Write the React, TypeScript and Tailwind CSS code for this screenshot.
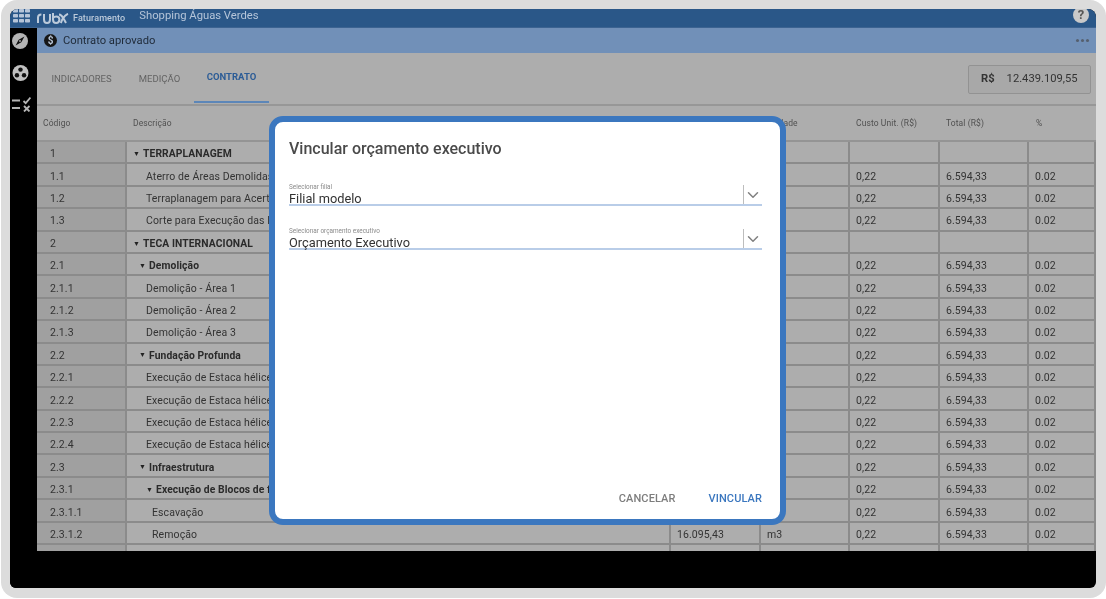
import { ChevronDown } from 'lucide-react';

type Row = {
  code: string;
  name: string;
  indent: string;
  group?: boolean;
  blank?: boolean;
};

const rows: Row[] = [
  { code: '1', name: 'TERRAPLANAGEM', indent: 'pl-[6px]', group: true, blank: true },
  { code: '1.1', name: 'Aterro de Áreas Demolidas', indent: 'pl-[19px]' },
  { code: '1.2', name: 'Terraplanagem para Acerto', indent: 'pl-[19px]' },
  { code: '1.3', name: 'Corte para Execução das D', indent: 'pl-[19px]' },
  { code: '2', name: 'TECA INTERNACIONAL', indent: 'pl-[6px]', group: true, blank: true },
  { code: '2.1', name: 'Demolição', indent: 'pl-[12px]', group: true },
  { code: '2.1.1', name: 'Demolição - Área 1', indent: 'pl-[19px]' },
  { code: '2.1.2', name: 'Demolição - Área 2', indent: 'pl-[19px]' },
  { code: '2.1.3', name: 'Demolição - Área 3', indent: 'pl-[19px]' },
  { code: '2.2', name: 'Fundação Profunda', indent: 'pl-[12px]', group: true },
  { code: '2.2.1', name: 'Execução de Estaca hélice', indent: 'pl-[19px]' },
  { code: '2.2.2', name: 'Execução de Estaca hélice', indent: 'pl-[19px]' },
  { code: '2.2.3', name: 'Execução de Estaca hélice', indent: 'pl-[19px]' },
  { code: '2.2.4', name: 'Execução de Estaca hélice', indent: 'pl-[19px]' },
  { code: '2.3', name: 'Infraestrutura', indent: 'pl-[12px]', group: true },
  { code: '2.3.1', name: 'Execução de Blocos de f', indent: 'pl-[19px]', group: true },
  { code: '2.3.1.1', name: 'Escavação', indent: 'pl-[25px]' },
  { code: '2.3.1.2', name: 'Remoção', indent: 'pl-[25px]' },
  { code: '', name: '', indent: '', blank: true },
];

const cols = 'grid grid-cols-[90px_544px_90px_89px_90px_89px_1fr]';
const cell = 'h-[22.4px] border-r-2 border-b-2 border-[#8b8b8b] pl-[6px] pt-[4px] flex items-center overflow-hidden whitespace-nowrap';

function GridIcon() {
  return (
    <svg width="17" height="14" viewBox="0 0 17 14" fill="#b5c4d8">
      {[0, 5, 10].map((y) =>
        [0, 6, 12].map((x) => <rect key={`${x}-${y}`} x={x} y={y} width="5" height="3.6" rx="0.8" />)
      )}
    </svg>
  );
}

function RubxLogo() {
  return (
    <svg width="32" height="11" viewBox="0 0 32 11" fill="none" stroke="#bccada" strokeWidth="2">
      <path d="M1 10V4.500C1 2.600 2.200 1.600 4.400 1.600" />
      <path d="M7 1v5.500C7 8.800 8.400 10 10 10s3-1.200 3-3.500V1" />
      <path d="M16 0v6.500c0 2 1.400 3.500 3.200 3.500 1.900 0 3.200-1.500 3.200-3.400 0-1.800-1.300-3.200-3.200-3.200-1.300 0-2.400.6-3.200 1.600" />
      <path d="M22 1.600c2 .1 3.200 1.500 4.500 3.900L29 10M31 .8c-2.600 1-4.400 3.400-5.600 5.400L23.800 10" />
    </svg>
  );
}

function Compass() {
  return (
    <svg width="16" height="16" viewBox="0 0 18 18">
      <circle cx="9" cy="9" r="9" fill="#b4b4b4" />
      <path d="M14 4 10.500 10.500 4 14 7.500 7.500Z" fill="#111" />
      <circle cx="9" cy="9" r="1" fill="#b4b4b4" />
    </svg>
  );
}

function Reel() {
  return (
    <svg width="17" height="16" viewBox="0 0 18 18">
      <circle cx="9" cy="9" r="9" fill="#c0c0c0" />
      <circle cx="9" cy="5.200" r="2.500" fill="#111" />
      <circle cx="5" cy="11.500" r="2.500" fill="#111" />
      <circle cx="13" cy="11.500" r="2.500" fill="#111" />
    </svg>
  );
}

function CheckList() {
  return (
    <svg width="20" height="16" viewBox="0 0 20 16" fill="none" stroke="#b4b4b4" strokeWidth="1.800">
      <path d="M1 4.500h8M1 12h8" />
      <path d="M12.500 5l2.200 2.200L19.500 1.500" />
      <path d="M13 10l5.500 5.500M18.500 10L13 15.500" />
    </svg>
  );
}

function Field({ label, value }: { label: string; value: string }) {
  return (
    <div className="relative h-[28px] border-b-2 border-[#b9cde8]">
      <div className="text-[6.4px] leading-[7px] text-[#8a8a8a] pt-[6px]">{label}</div>
      <div className="text-[12.8px] leading-[15px] text-[#333]">{value}</div>
      <div className="absolute right-0 top-[7px] flex items-center h-[19px]">
        <div className="w-px h-[19px] bg-[#bdbdbd]" />
        <ChevronDown size={18} strokeWidth={2} className="text-[#808080]" />
      </div>
    </div>
  );
}

export default function App() {
  return (
    <div className="relative w-screen h-screen overflow-hidden bg-white font-['Roboto',sans-serif] blur-[0.4px]">
      <div className="ml-px h-[598px] w-[1105px] rounded-[16px] bg-[#dcdcdc] pt-[9px] pl-[9px] pr-[10px] pb-[10px]">
        <div className="flex flex-col h-full rounded-t-[8px] rounded-b-[6px] overflow-hidden bg-black">
          {/* top bar */}
          <div className="relative h-[19px] shrink-0 flex items-center bg-[#2a5788] border-b border-[#3c6391]">
            <div className="ml-[3px] -mt-[4px]"><GridIcon /></div>
            <div className="ml-[7px]"><RubxLogo /></div>
            <span className="ml-[4px] mt-px text-[9px] font-medium tracking-[0.1px] text-[#bccada]">Faturamento</span>
            <span className="ml-[14px] -mt-[4px] text-[11.25px] text-[#b5c5d9]">Shopping Águas Verdes</span>
            <div className="absolute right-[7px] -top-[2px] w-[16px] h-[16px] rounded-full bg-[#c9c9c9] text-[#555] text-[13px] font-bold leading-[16px] text-center">?</div>
          </div>

          <div className="flex flex-1 min-h-0">
            {/* left rail */}
            <div className="w-[27px] shrink-0 flex flex-col items-start bg-black pt-[5px] pl-[2px]">
              <Compass />
              <div className="mt-[16px]"><Reel /></div>
              <div className="mt-[15px] -ml-[1px]"><CheckList /></div>
            </div>

            <div className="flex-1 min-w-0 flex flex-col">
              <div className="h-[25px] shrink-0 flex items-center justify-between bg-[#7190b8] pl-[7px] pr-[7px]">
                <div className="flex items-center">
                  <span className="w-[13px] h-[13px] rounded-full bg-[#161616] text-[#b9c6d8] text-[10px] font-bold leading-[13px] text-center">$</span>
                  <span className="ml-[6px] pt-[1px] text-[11.2px] text-[#1f2a38]">Contrato aprovado</span>
                </div>
                <span className="flex gap-[2px]">
                  <i className="w-[3px] h-[3px] rounded-full bg-[#55606e]" />
                  <i className="w-[3px] h-[3px] rounded-full bg-[#55606e]" />
                  <i className="w-[3px] h-[3px] rounded-full bg-[#55606e]" />
                </span>
              </div>

              {/* tabs */}
              <div className="h-[53px] shrink-0 flex justify-between bg-[#adadad] border-b-2 border-[#979797]">
                <div className="flex items-stretch text-[9.5px] pt-[1px]">
                  <div className="w-[73px] ml-[8px] flex items-center justify-center text-[#636363]">INDICADORES</div>
                  <div className="w-[69px] ml-[7px] flex items-center justify-center text-[#636363]">MEDIÇÃO</div>
                  <div className="w-[75px] flex items-center justify-center font-bold text-[#2c5c96] border-b-2 border-[#5c86b8] mb-[1px]">CONTRATO</div>
                </div>
                <div className="self-start mt-[12px] mr-[5px] w-[123px] h-[29px] flex items-center rounded-[2px] border border-[#929292] bg-[#a8a8a8] text-[11.2px] text-[#333]">
                  <span className="ml-[12px] font-bold">R$</span>
                  <span className="ml-[12px]">12.439.109,55</span>
                </div>
              </div>

              {/* table */}
              <div className="h-[445px] shrink-0 overflow-hidden bg-[#adadad] text-[10.5px] tracking-[0.1px] text-[#333]">
                <div className={`${cols} h-[36px] border-b-2 border-[#949494] text-[8.5px] text-[#505050] items-center`}>
                  <div className="pl-[6px]">Código</div>
                  <div className="pl-[6px]">Descrição</div>
                  <div className="pl-[6px]">Quantidade</div>
                  <div className="pl-[5px]">Unidade</div>
                  <div className="pl-[6px]">Custo Unit. (R$)</div>
                  <div className="pl-[6px]">Total (R$)</div>
                  <div className="pl-[7px]">%</div>
                </div>
                {rows.map((r, i) => (
                  <div key={i} className={cols}>
                    <div className={`${cell} bg-[#a0a0a0] pl-[13px]`}>{r.code}</div>
                    <div className={`${cell} ${r.indent}`}>
                      {r.group && <span className="mr-[3px] text-[7px] text-[#222]">▼</span>}
                      <span className={r.group ? 'font-bold text-[10.3px] text-[#2a2a2a]' : ''}>{r.name}</span>
                    </div>
                    <div className={cell}>{r.blank ? '' : '16.095,43'}</div>
                    <div className={`${cell} pl-[5px]`}>{r.blank ? '' : 'm3'}</div>
                    <div className={cell}>{r.blank ? '' : '0,22'}</div>
                    <div className={cell}>{r.blank ? '' : '6.594,33'}</div>
                    <div className={`${cell} border-r-0`}>{r.blank ? '' : '0.02'}</div>
                  </div>
                ))}
              </div>
            </div>
          </div>
        </div>
      </div>

      {/* modal */}
      <div className="absolute left-[269px] top-[116px] w-[517px] h-[409px] flex flex-col rounded-[14px] border-[6px] border-[#3b77bf] bg-white pl-[14px] pr-[18px]">
        <h2 className="mt-[17px] text-[16px] leading-[20px] font-medium text-[#4a4a4a]">Vincular orçamento executivo</h2>
        <div className="mt-[19px]">
          <Field label="Selecionar filial" value="Filial modelo" />
        </div>
        <div className="mt-[16px]">
          <Field label="Selecionar orçamento executivo" value="Orçamento Executivo" />
        </div>
        <div className="mt-auto mb-[12px] flex justify-end gap-[33px] text-[11px] font-medium tracking-[0.1px]">
          <button className="text-[#7d7d7d]">CANCELAR</button>
          <button className="text-[#3b77bf]">VINCULAR</button>
        </div>
      </div>
    </div>
  );
}
